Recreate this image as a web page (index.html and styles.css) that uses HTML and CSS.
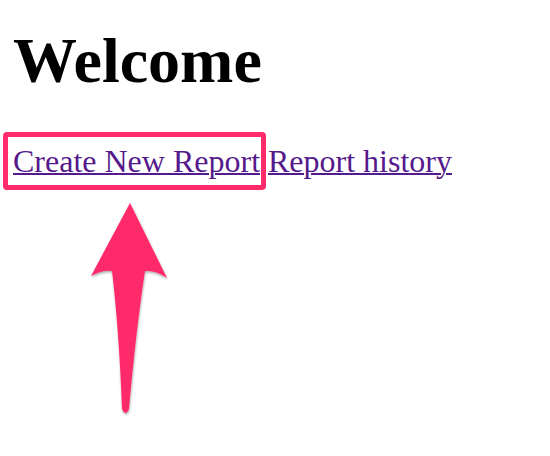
FILE: index.html
```html
<!DOCTYPE html>
<html>
<head>
<meta charset="utf-8">
<link rel="stylesheet" href="styles.css">
</head>
<body>
<h1 class="title">Welcome</h1>
<nav class="links"><a class="link" href="#">Create New Report</a> <a class="link" href="#">Report history</a></nav>
<div class="highlight"></div>
<svg class="arrow" width="550" height="456" viewBox="0 0 550 456">
  <defs>
    <filter id="sh" x="-20%" y="-20%" width="140%" height="140%">
      <feDropShadow dx="0.5" dy="1.5" stdDeviation="1.2" flood-color="#000" flood-opacity="0.35"/>
    </filter>
  </defs>
  <path filter="url(#sh)" fill="#ff2b6b" d="M130 203 L167 278 Q156 270 145 271 Q136 330 129 409 Q125.5 417 122 409 Q119 330 112 271 Q102 270 91 276 Z"/>
</svg>
</body>
</html>
```
FILE: styles.css
```css
html, body {
  margin: 0;
  padding: 0;
  background: #fff;
}
body {
  padding: 25px 0 0 13px;
  font-family: "Liberation Serif", "Times New Roman", serif;
  position: relative;
  height: 456px;
  box-sizing: border-box;
  overflow: hidden;
}
.title {
  margin: 0;
  font-size: 64px;
  line-height: 72px;
  font-weight: bold;
  color: #000;
}
.links {
  margin-top: 44px;
  font-size: 32px;
  line-height: 40px;
}
.link {
  color: #551a8b;
  text-decoration: underline;
  text-decoration-thickness: 2px;
}
.highlight {
  position: absolute;
  left: 3px;
  top: 132px;
  width: 263px;
  height: 58px;
  box-sizing: border-box;
  border: 5px solid #ff2b6b;
  border-radius: 4px;
}
.arrow {
  position: absolute;
  left: 0;
  top: 0;
}
```
